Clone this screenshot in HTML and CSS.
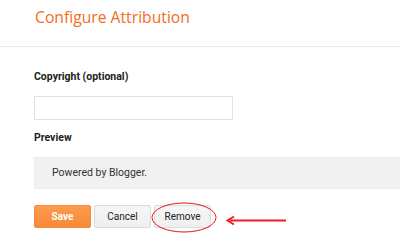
FILE: index.html
```html
<!DOCTYPE html>
<html lang="en">
<head>
<meta charset="UTF-8" />
<meta name="viewport" content="width=device-width, initial-scale=1" />
<title>Configure Attribution</title>
<link rel="stylesheet" href="styles.css">
</head>
<body>
<div class="page">
  <header class="top">
    <h1>Configure Attribution</h1>
  </header>

  <form class="config">
    <label for="copyright">Copyright (optional)</label>
    <input type="text" id="copyright" name="copyright" />

    <div class="label">Preview</div>
    <div class="preview">Powered by Blogger.</div>

    <div class="actions">
      <button type="submit" class="btn btn-save">Save</button>
      <button type="button" class="btn">Cancel</button>
      <button type="button" class="btn">Remove</button>
    </div>
  </form>

  <!-- red markup drawn over the screenshot -->
  <svg class="markup" width="400" height="242" viewBox="0 0 400 242">
    <ellipse cx="184" cy="217.5" rx="32" ry="14.5" fill="none" stroke="#e8141b" stroke-width="1" />
    <line x1="230" y1="220.5" x2="286" y2="220.5" stroke="#f21d23" stroke-width="2" />
    <path d="M234 216.5 L227.5 220.5 L234 224.5" fill="none" stroke="#f21d23" stroke-width="2" />
  </svg>
</div>
</body>
</html>
```

FILE: styles.css
```css
body {
  margin: 0; padding: 0;
  font-family: Roboto, 'Liberation Sans', sans-serif;
  background: #fff;
  color: #222;
  overflow: hidden;
}
.page {
  position: relative;
  width: 400px;
  height: 242px;
  overflow: hidden;
}
.top {
  height: 46px;
  border-bottom: 1px solid #e8e8e8;
  padding-left: 35px;
}
.top h1 {
  margin: 0;
  padding-top: 5px;
  font-family: 'Open Sans', sans-serif;
  font-weight: normal;
  font-size: 15.7px;
  line-height: 24px;
  color: #f36d21;
}
.config {
  padding-left: 34px;
}
label, .label {
  display: block;
  font-size: 10.5px;
  font-weight: bold;
  line-height: 14px;
}
label {
  margin-top: 23px;
}
input[type=text] {
  display: block;
  box-sizing: border-box;
  width: 199px;
  height: 24px;
  margin-top: 12px;
  border: 1px solid #e2e2e2;
  border-radius: 0;
  padding: 0 6px;
}
.label {
  margin-top: 11px;
}
.preview {
  box-sizing: border-box;
  width: 380px;
  height: 32px;
  margin-top: 12px;
  padding-left: 17px;
  line-height: 30px;
  font-size: 10.5px;
  color: #333;
  background: #f1f1f1;
  border: 1px solid #ececec;
}
.actions {
  display: flex;
  gap: 3px;
  margin-top: 16px;
}
.btn {
  box-sizing: border-box;
  width: 57px;
  height: 23px;
  padding: 0;
  font-family: Roboto, 'Liberation Sans', sans-serif;
  font-size: 10px;
  color: #222;
  background: linear-gradient(#f6f6f6, #efefef);
  border: 1px solid #dcdcdc;
  border-radius: 2px;
}
.btn-save {
  color: #fff;
  font-weight: bold;
  background: linear-gradient(#fd9b4e, #f88a35);
  border-color: #f38a3c;
}
.markup {
  position: absolute;
  left: 0; top: 0;
}
```
